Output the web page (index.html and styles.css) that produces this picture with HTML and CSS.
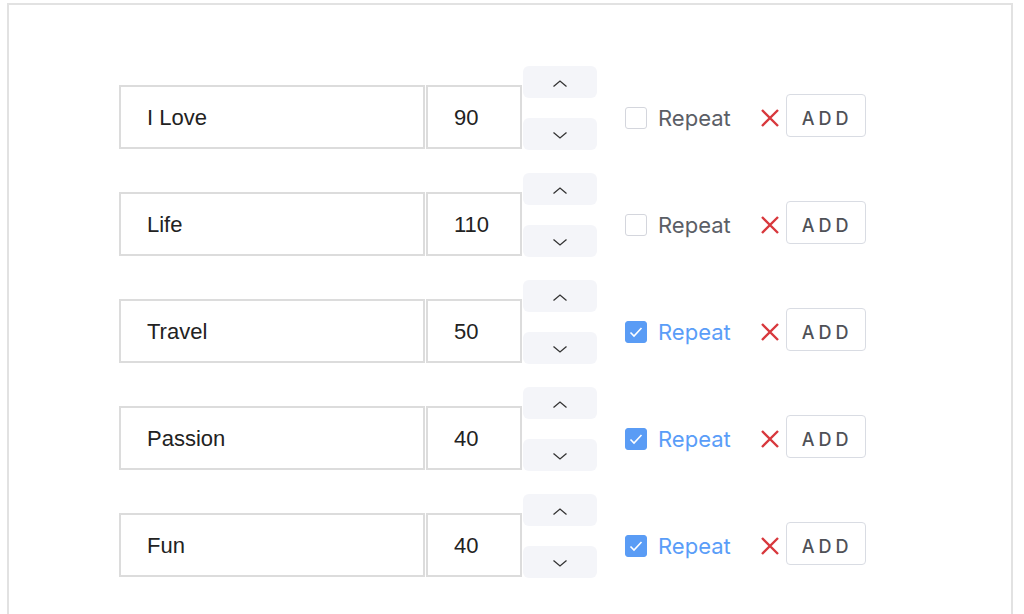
FILE: index.html
```html
<!DOCTYPE html>
<html>
<head>
<meta charset="utf-8">
<link rel="stylesheet" href="styles.css">
</head>
<body>
<div class="frame">
  <div class="row">
    <div class="field text">I Love</div>
    <div class="field num">90</div>
    <div class="spinner">
      <div class="spin"><svg width="16" height="9" viewBox="0 0 16 9"><path d="M1.5 7.5 L8 2 L14.5 7.5" fill="none" stroke="#333" stroke-width="1.3"/></svg></div>
      <div class="spin"><svg width="16" height="9" viewBox="0 0 16 9"><path d="M1.5 1.5 L8 7 L14.5 1.5" fill="none" stroke="#333" stroke-width="1.3"/></svg></div>
    </div>
    <div class="check"><span class="box"></span><span class="label">Repeat</span></div>
    <svg class="del" width="20" height="20" viewBox="0 0 20 20"><path d="M2 2 L18 18 M18 2 L2 18" stroke="#d8383d" stroke-width="2.4" fill="none"/></svg>
    <div class="add">ADD</div>
  </div>
  <div class="row">
    <div class="field text">Life</div>
    <div class="field num">110</div>
    <div class="spinner">
      <div class="spin"><svg width="16" height="9" viewBox="0 0 16 9"><path d="M1.5 7.5 L8 2 L14.5 7.5" fill="none" stroke="#333" stroke-width="1.3"/></svg></div>
      <div class="spin"><svg width="16" height="9" viewBox="0 0 16 9"><path d="M1.5 1.5 L8 7 L14.5 1.5" fill="none" stroke="#333" stroke-width="1.3"/></svg></div>
    </div>
    <div class="check"><span class="box"></span><span class="label">Repeat</span></div>
    <svg class="del" width="20" height="20" viewBox="0 0 20 20"><path d="M2 2 L18 18 M18 2 L2 18" stroke="#d8383d" stroke-width="2.4" fill="none"/></svg>
    <div class="add">ADD</div>
  </div>
  <div class="row">
    <div class="field text">Travel</div>
    <div class="field num">50</div>
    <div class="spinner">
      <div class="spin"><svg width="16" height="9" viewBox="0 0 16 9"><path d="M1.5 7.5 L8 2 L14.5 7.5" fill="none" stroke="#333" stroke-width="1.3"/></svg></div>
      <div class="spin"><svg width="16" height="9" viewBox="0 0 16 9"><path d="M1.5 1.5 L8 7 L14.5 1.5" fill="none" stroke="#333" stroke-width="1.3"/></svg></div>
    </div>
    <div class="check on"><span class="box"><svg width="16" height="14" viewBox="0 0 16 14"><path d="M2.5 7.5 L6 11 L13.5 3" fill="none" stroke="#fff" stroke-width="1.6"/></svg></span><span class="label">Repeat</span></div>
    <svg class="del" width="20" height="20" viewBox="0 0 20 20"><path d="M2 2 L18 18 M18 2 L2 18" stroke="#d8383d" stroke-width="2.4" fill="none"/></svg>
    <div class="add">ADD</div>
  </div>
  <div class="row">
    <div class="field text">Passion</div>
    <div class="field num">40</div>
    <div class="spinner">
      <div class="spin"><svg width="16" height="9" viewBox="0 0 16 9"><path d="M1.5 7.5 L8 2 L14.5 7.5" fill="none" stroke="#333" stroke-width="1.3"/></svg></div>
      <div class="spin"><svg width="16" height="9" viewBox="0 0 16 9"><path d="M1.5 1.5 L8 7 L14.5 1.5" fill="none" stroke="#333" stroke-width="1.3"/></svg></div>
    </div>
    <div class="check on"><span class="box"><svg width="16" height="14" viewBox="0 0 16 14"><path d="M2.5 7.5 L6 11 L13.5 3" fill="none" stroke="#fff" stroke-width="1.6"/></svg></span><span class="label">Repeat</span></div>
    <svg class="del" width="20" height="20" viewBox="0 0 20 20"><path d="M2 2 L18 18 M18 2 L2 18" stroke="#d8383d" stroke-width="2.4" fill="none"/></svg>
    <div class="add">ADD</div>
  </div>
  <div class="row">
    <div class="field text">Fun</div>
    <div class="field num">40</div>
    <div class="spinner">
      <div class="spin"><svg width="16" height="9" viewBox="0 0 16 9"><path d="M1.5 7.5 L8 2 L14.5 7.5" fill="none" stroke="#333" stroke-width="1.3"/></svg></div>
      <div class="spin"><svg width="16" height="9" viewBox="0 0 16 9"><path d="M1.5 1.5 L8 7 L14.5 1.5" fill="none" stroke="#333" stroke-width="1.3"/></svg></div>
    </div>
    <div class="check on"><span class="box"><svg width="16" height="14" viewBox="0 0 16 14"><path d="M2.5 7.5 L6 11 L13.5 3" fill="none" stroke="#fff" stroke-width="1.6"/></svg></span><span class="label">Repeat</span></div>
    <svg class="del" width="20" height="20" viewBox="0 0 20 20"><path d="M2 2 L18 18 M18 2 L2 18" stroke="#d8383d" stroke-width="2.4" fill="none"/></svg>
    <div class="add">ADD</div>
  </div>
</div>
</body>
</html>
```
FILE: styles.css
```css
html, body {
  margin: 0;
  padding: 0;
  background: #fff;
  overflow: hidden;
}
body {
  width: 1024px;
  height: 614px;
}
.frame {
  margin: 3px 0 0 7px;
  width: 1006px;
  height: 611px;
  border: 2px solid #e2e2e2;
  border-bottom: none;
  padding: 61px 0 0 110px;
  box-sizing: border-box;
  display: flex;
  flex-direction: column;
  gap: 23px;
  overflow: hidden;
}
.row {
  display: flex;
  align-items: flex-start;
  height: 84px;
  flex: none;
}
.field {
  box-sizing: border-box;
  height: 64px;
  margin-top: 19px;
  border: 2px solid #dcdcdc;
  font-family: "Liberation Sans", Arial, sans-serif;
  font-size: 22px;
  color: #222;
  display: flex;
  align-items: center;
  padding-left: 26px;
  padding-top: 2px;
}
.text {
  width: 306px;
}
.num {
  width: 96px;
  margin-left: 1px;
}
.spinner {
  margin-left: 1px;
  width: 74px;
  display: flex;
  flex-direction: column;
  gap: 20px;
}
.spin {
  height: 32px;
  background: #f4f5f9;
  border-radius: 6px;
  display: flex;
  align-items: center;
  justify-content: center;
  padding-top: 3px;
  box-sizing: border-box;
}
.check {
  margin-left: 28px;
  margin-top: 40px;
  display: flex;
  align-items: center;
  gap: 11px;
  font-family: Inter, "Noto Sans", sans-serif;
  font-size: 22px;
  color: #5b5e66;
}
.box {
  box-sizing: border-box;
  width: 22px;
  height: 22px;
  border: 1.5px solid #d4d6dd;
  border-radius: 3px;
  background: #fff;
  display: flex;
  align-items: center;
  justify-content: center;
}
.check.on {
  color: #5a9df8;
}
.check.on .box {
  background: #5a9cf5;
  border-color: #5a9cf5;
}
.label {
  line-height: 24px;
}
.del {
  margin-left: 29px;
  margin-top: 42px;
}
.add {
  box-sizing: border-box;
  margin-left: 6px;
  margin-top: 28px;
  width: 80px;
  height: 43px;
  border: 1.5px solid #d9dce3;
  border-radius: 4px;
  display: flex;
  align-items: center;
  justify-content: center;
  font-family: Inter, "Noto Sans", sans-serif;
  font-size: 18px;
  font-weight: 500;
  letter-spacing: 4px;
  padding-left: 3px;
  padding-top: 5px;
  color: #4f5157;
}
```
